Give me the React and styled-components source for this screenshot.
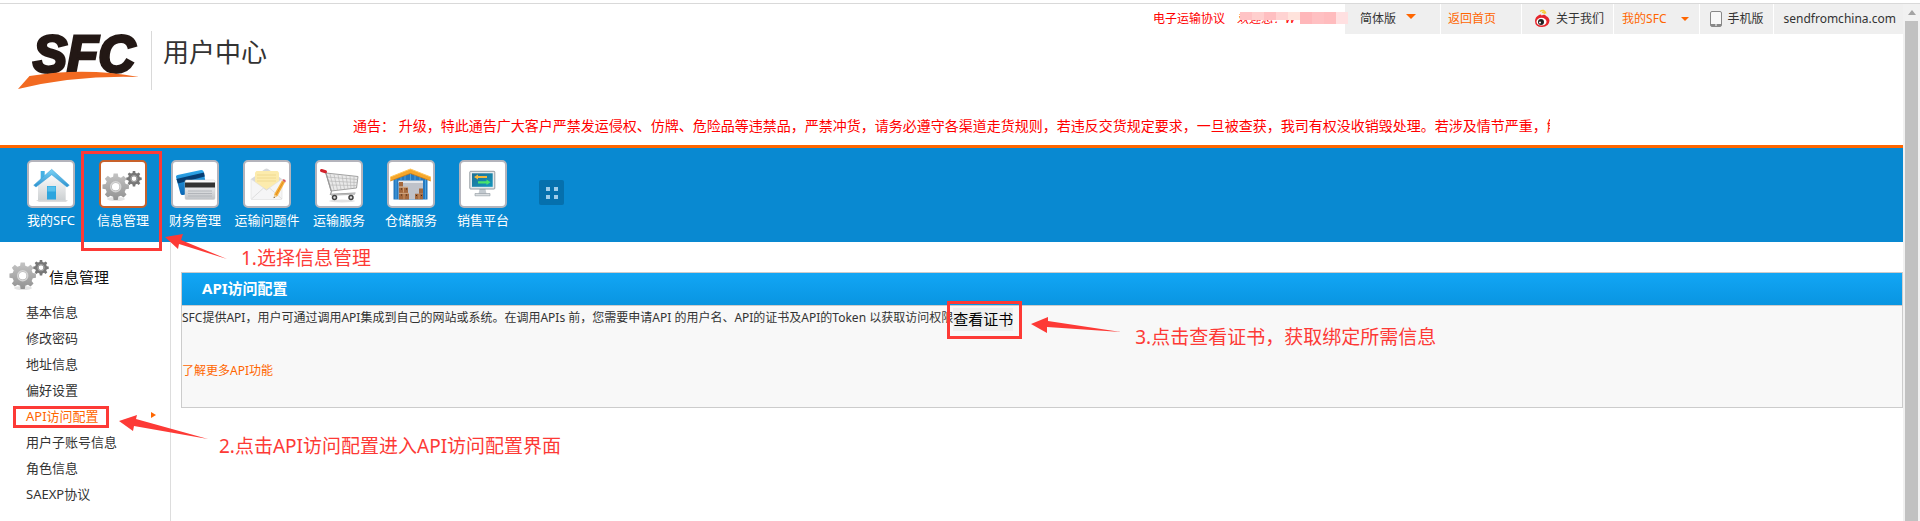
import React from 'react';
import styled, { createGlobalStyle, css } from 'styled-components';

const GlobalStyle = createGlobalStyle`
	* {
		box-sizing: border-box;
		margin: 0;
		padding: 0;
	}

	body {
		background: #fff;
		color: #333;
		font-family: 'Noto Sans', 'Noto Sans CJK SC', sans-serif;
		font-size: 12px;
	}

	a {
		color: inherit;
		text-decoration: none;
	}

	ul {
		list-style: none;
	}

	button {
		border: 0;
		background: none;
		color: inherit;
		font: inherit;
		cursor: pointer;
	}

	svg {
		display: block;
		flex: none;
		overflow: visible;
	}
`;

const Page = styled.div`
	display: flex;
	min-height: calc(100vh - 3px);
	margin-top: 3px;
	border-top: 1px solid #d9d9d9;
	overflow: hidden;
`;

const Content = styled.div`
	flex: 1;
	min-width: 0;
	display: flex;
	flex-direction: column;
`;

const ScrollTrack = styled.div`
	width: 17px;
	display: flex;
	flex-direction: column;
	align-items: center;
	background: #f1f1f1;
`;

const ScrollArrow = styled.div`
	margin: 6px 0;
	border: 4px solid transparent;
	border-top: 0;
	border-bottom: 5px solid #a3a3a3;
`;

const ScrollThumb = styled.div`
	flex: 1;
	width: 13px;
	background: #c1c1c1;
`;

const HeaderRow = styled.div`
	display: flex;
	justify-content: space-between;
	align-items: flex-start;
`;

const Brand = styled.div`
	display: flex;
	padding: 27px 0 0 17px;
`;

const BrandTitle = styled.h1`
	height: 59px;
	margin-left: 10px;
	padding-left: 11px;
	border-left: 1px solid #d9d9d9;
	font-size: 26px;
	font-weight: 400;
	line-height: 42px;
`;

const TopBar = styled.div`
	display: flex;
	height: 30px;
	line-height: 30px;
	white-space: nowrap;
`;

const Agreement = styled.a`
	color: #f00;
	margin-right: 12px;
`;

const Welcome = styled.span`
	position: relative;
	width: 108px;
	color: #f00;
	font-style: italic;
`;

const Mosaic = styled.span`
	position: absolute;
	top: 8px;
	left: 3px;
	display: flex;
	align-items: flex-start;
`;

const MosaicCell = styled.i`
	width: 12px;
	height: ${({ $tall }) => ($tall ? 12 : 8)}px;
	background: ${({ $tone }) => $tone};
`;

const barItem = css`
	display: flex;
	align-items: center;
	height: 30px;
	padding: 0 ${({ $right }) => $right}px 0 ${({ $left }) => $left}px;
	gap: ${({ $gap }) => $gap || 0}px;
	background: #efefef;
	color: ${({ $hot }) => ($hot ? '#f60' : '#333')};

	& + & {
		margin-left: 1px;
	}
`;

const BarLink = styled.a`
	${barItem}
`;

const BarButton = styled.button`
	${barItem}
	margin-right: 1px;
`;

const Caret = styled.i`
	border: ${({ $size }) => $size}px solid transparent;
	border-top-color: #f60;
	border-bottom: 0;
	margin-bottom: ${({ $raise }) => $raise || 0}px;
`;

const Notice = styled.p`
	margin: 26px 353px 9px;
	overflow: hidden;
	color: #f00;
	font-size: 14px;
	line-height: 20px;
	white-space: nowrap;
`;

const MainNav = styled.nav`
	position: relative;
	z-index: 2;
	display: flex;
	height: 97px;
	padding-left: 15px;
	border-top: 3px solid #f60;
	background: #0989d1;
`;

const NavItem = styled.div`
	position: relative;
	width: 72px;
	padding-top: 12px;
`;

const NavLink = styled.a`
	display: flex;
	flex-direction: column;
	align-items: center;
	color: #fff;
	font-size: 13px;
	line-height: 24px;
	white-space: nowrap;
`;

const IconTile = styled.span`
	width: 48px;
	height: 48px;
	border: 2px solid ${({ $active }) => ($active ? '#c8612a' : '#b4b4bc')};
	border-radius: 5px;
	background: #fff;
`;

const MoreButton = styled.button`
	display: grid;
	grid-template-columns: 4px 4px;
	gap: 4px;
	place-content: center;
	width: 25px;
	height: 25px;
	margin: 32px 0 0 20px;
	border-radius: 2px;
	background: #0570ad;
`;

const Dot = styled.i`
	height: 4px;
	background: #9fcdea;
`;

const Body = styled.div`
	flex: 1;
	display: flex;
`;

const Sidebar = styled.aside`
	position: relative;
	z-index: 1;
	width: 171px;
	padding-top: 18px;
	border-right: 1px solid #ddd;
`;

const SideTitle = styled.h2`
	display: flex;
	height: 34px;
	margin-bottom: 4px;
	padding-left: 9px;
	color: #111;
	font-size: 15px;
	font-weight: 400;
	line-height: 34px;
`;

const SideItem = styled.li`
	position: relative;
	display: flex;
	align-items: center;
	justify-content: space-between;
	height: 26px;
	padding: 0 14px 0 26px;
	color: ${({ $active }) => ($active ? '#f60' : '#333')};
	font-size: 13px;
	white-space: nowrap;
`;

const SideMarker = styled.i`
	border: 3px solid transparent;
	border-left: 5px solid #f60;
	border-right: 0;
`;

const Main = styled.main`
	flex: 1;
	min-width: 0;
	padding: 30px 0 0 10px;
`;

const Panel = styled.section`
	border: 1px solid #ccc;
	background: #f8f8f8;
`;

const PanelTitle = styled.h3`
	height: 33px;
	padding-left: 20px;
	border-bottom: 1px solid #ccc;
	background: linear-gradient(#12a6f5, #0995e1);
	color: #fff;
	font-size: 15px;
	line-height: 31px;
`;

const PanelBody = styled.div`
	padding-bottom: 24px;
	line-height: 24px;
`;

const ApiRow = styled.div`
	display: flex;
	align-items: flex-start;
	margin-bottom: 28px;
	white-space: nowrap;
`;

const CertSlot = styled.div`
	position: relative;
	padding-top: 2px;
`;

const CertButton = styled.button`
	display: block;
	height: 23px;
	background: #efefef;
	color: #000;
	font-size: 15px;
	line-height: 23px;
`;

const MoreLink = styled.a`
	color: #f60;
`;

/* red guide marks that lie over the page */
const Frame = styled.span`
	position: absolute;
	top: ${({ $top }) => $top}px;
	left: ${({ $left }) => $left}px;
	width: ${({ $width }) => $width}px;
	height: ${({ $height }) => $height}px;
	border: 3px solid #fd3a36;
	pointer-events: none;
`;

const ArrowSvg = styled.svg`
	position: absolute;
	top: ${({ $top }) => $top}px;
	left: ${({ $left }) => $left}px;
	fill: #fd3a36;
	pointer-events: none;
`;

const Hint = styled.span`
	position: absolute;
	top: ${({ $top }) => $top}px;
	left: ${({ $left }) => $left}px;
	color: #fd3a36;
	font-size: 19px;
	line-height: 24px;
	white-space: nowrap;
`;

const Arrow = ({ top, left, width, height, points }) => (
	<ArrowSvg $top={top} $left={left} width={width} height={height} aria-hidden="true">
		<polygon points={points} />
	</ArrowSvg>
);

const gearPath = (cx, cy, outer, inner, hole) => {
	const teeth = 8;
	const step = (Math.PI * 2) / teeth;
	const points = [];
	for (let i = 0; i < teeth; i++) {
		[
			[-0.32, inner],
			[-0.2, outer],
			[0.2, outer],
			[0.32, inner],
		].forEach(([shift, r]) => {
			const a = (i + shift) * step;
			points.push(`${(cx + r * Math.cos(a)).toFixed(2)} ${(cy + r * Math.sin(a)).toFixed(2)}`);
		});
	}
	return `M${points.join('L')}Z M${cx - hole} ${cy}a${hole} ${hole} 0 1 0 ${hole * 2} 0a${hole} ${hole} 0 1 0 ${-hole * 2} 0Z`;
};

const Gears = ({ width = 44, height = 44, viewBox = '2 2 44 44' }) => (
	<svg width={width} height={height} viewBox={viewBox} aria-hidden="true">
		<defs>
			<linearGradient id="gearLight" x2="0" y2="1">
				<stop stopColor="#c4c4c4" />
				<stop offset="1" stopColor="#929292" />
			</linearGradient>
		</defs>
		<ellipse cx="17" cy="39" rx="9" ry="2" fill="#e4e4e4" />
		<path d={gearPath(16.7, 26.7, 13.4, 10.4, 3.8)} fill="url(#gearLight)" fillRule="evenodd" />
		<circle cx="16.7" cy="26.7" r="5" fill="none" stroke="#d4d4d4" strokeWidth="1.5" />
		<path d={gearPath(35, 18.7, 7.8, 6, 2.4)} fill="#777" fillRule="evenodd" />
		<circle cx="35" cy="18.7" r="3.2" fill="none" stroke="#a8a8a8" />
	</svg>
);

const Home = () => (
	<svg width="44" height="44" viewBox="2 2 44 44" aria-hidden="true">
		<defs>
			<linearGradient id="homeWall" x2="0" y2="1">
				<stop stopColor="#fff" />
				<stop offset="1" stopColor="#ccd0d2" />
			</linearGradient>
			<linearGradient id="homeRoof" x2="0" y2="1">
				<stop stopColor="#7bd2f5" />
				<stop offset="1" stopColor="#2c92cf" />
			</linearGradient>
		</defs>
		<path d="M9 40h32l-2 2H12z" fill="#ddd" />
		<path d="M11 25L24.7 13 38.7 25v15.500H11z" fill="url(#homeWall)" />
		<path d="M13.700 11h4v6l-4 4z" fill="#45b1e4" />
		<path d="M24.700 9.300L42.300 25.200 40 27 24.700 14.700 9 27 6.700 25.200z" fill="url(#homeRoof)" stroke="#3a9ed6" strokeWidth=".5" />
		<path d="M20 26h9v13.500h-9z" fill="#2da5de" />
		<path d="M20.500 26.500h8v5h-8z" fill="#58c0ec" />
	</svg>
);

const Cards = () => (
	<svg width="44" height="44" viewBox="2 2 44 44" aria-hidden="true">
		<defs>
			<linearGradient id="cardBlue" x2="0" y2="1">
				<stop stopColor="#2fa9ea" />
				<stop offset="1" stopColor="#0b66b4" />
			</linearGradient>
			<linearGradient id="cardGrey" x2="0" y2="1">
				<stop stopColor="#fff" />
				<stop offset="1" stopColor="#bfc2c6" />
			</linearGradient>
		</defs>
		<path d="M6.500 15L30 10q2-.4 2.600 1.500L36 30 12 35q-2 .4-2.600-1.500L5 17q-.4-1.600 1.500-2z" fill="url(#cardBlue)" />
		<path d="M5.400 19L33 12.500l.8 4L7 23.500z" fill="#063d72" />
		<rect x="14" y="20" width="30" height="19.500" rx="1.500" fill="url(#cardGrey)" stroke="#ccc" strokeWidth=".5" />
		<path d="M14 22.500h30v5H14z" fill="#333" />
		<path d="M17 31h24M17 33.500h24M17 36h24" stroke="#b2b5ba" />
	</svg>
);

const Envelope = () => (
	<svg width="44" height="44" viewBox="2 2 44 44" aria-hidden="true">
		<path d="M8 19L22 9q1.500-1 3 0l14 10v20H8z" fill="#d7d9dc" />
		<path d="M12 12.500l1.500-1.500h21l1.500 1.500V30H12z" fill="#fcebad" />
		<path d="M14 15h19M14 18h19M14 21h19" stroke="#eed68c" strokeWidth=".8" />
		<path d="M8 19l15.500 11L39 19v19.500q0 1-1 1H9q-1 0-1-1z" fill="#f5f5f6" stroke="#ddd" strokeWidth=".6" />
		<path d="M8.500 39l12-11 3 2 3-2L39 39" fill="none" stroke="#d8d8d8" strokeWidth=".8" />
		<path d="M39 20.500l3 1.700L34.500 36l-3.700 2 .5-4z" fill="#f6b03b" />
		<path d="M40.500 21.400L33 35" stroke="#d98118" strokeWidth=".8" />
		<path d="M39.200 20.100l1-.9q2.500 0 2.600 1.700l-.6 1.700z" fill="#d3515a" />
		<path d="M31.200 34.500l2.700 1.600-3.200 2z" fill="#ecd0a0" />
		<path d="M30.900 36.700l1 .6-1.200.9z" fill="#333" />
	</svg>
);

const Cart = () => (
	<svg width="44" height="44" viewBox="2 2 44 44" fill="none" aria-hidden="true">
		<ellipse cx="27" cy="41" rx="13" ry="1.500" fill="#e2e2e2" />
		<path d="M11 13L43 16.500 41.500 28 16 31z" fill="#e9e9e9" stroke="#a2a2a2" />
		<path
			d="M15 14l4 16M19 14.500L22.500 30M23 15l3 14.500M27 15.300l2.500 14M31 15.600l2 13.400M35 16l1 12.700M39 16.400V28M12 17l30.700 2.500M13 21l29.300 1.500M14 25l28 .5"
			stroke="#b8b8b8"
			strokeWidth=".7"
		/>
		<path d="M7 11l3.500 1 6 19.500-1 2.800 25-1.300" stroke="#9a9a9a" strokeWidth="1.200" />
		<path d="M16 35l24-1" stroke="#bbb" strokeWidth="1.500" />
		<path d="M6.500 10.500l4 1.300" stroke="#d3232c" strokeWidth="3" strokeLinecap="round" />
		<circle cx="19.500" cy="37.500" r="2" fill="#ddd" stroke="#444" strokeWidth="1.500" />
		<circle cx="36" cy="37.500" r="2" fill="#ddd" stroke="#444" strokeWidth="1.500" />
	</svg>
);

const Warehouse = () => (
	<svg width="44" height="44" viewBox="2 2 44 44" aria-hidden="true">
		<path d="M6.500 17L23.500 11l17 6v22.500h-34z" fill="#2579c0" />
		<path d="M9 18v21M38.500 18v21M14 15v5M18 14v6M23.500 13v7M28 14v6M33 15v5" stroke="#4ba2df" />
		<path d="M11.500 20.700h24.500v18.600H11.500z" fill="#bfc2c9" />
		<path d="M11.500 20.700h24.500v2.300H11.500z" fill="#e5e7ea" />
		<path d="M12 22h4v4.500h-4zM12 27.500h9v5.500h-9zM12 33.500h10v6H12zM32 28.500h4v5h-4zM28 33.800h8v5.500h-8z" fill="#a4683c" />
		<path d="M12 27.200h9M12 33.300h10M16.500 27.500v5M17 34v5.500M32 34v5.500" stroke="#d9a677" strokeWidth=".8" />
		<path d="M14 29h1M19 29h1M14 35h1M19 35h1M29 35.500h1M34 35.500h1" stroke="#3f2412" />
		<path d="M23.400 9L43.800 17v4L23.400 13.500 3.300 21v-4z" fill="#f5a62b" />
		<path d="M3.300 17L23.400 9l20.400 8" fill="none" stroke="#ffc65c" />
		<path d="M3.300 21l20.100-7.500L43.800 21" fill="none" stroke="#c97610" strokeWidth=".7" />
	</svg>
);

const Monitor = () => (
	<svg width="44" height="44" viewBox="2 2 44 44" aria-hidden="true">
		<defs>
			<linearGradient id="screen" x2="1" y2="1">
				<stop stopColor="#1f7194" />
				<stop offset="1" stopColor="#1595bd" />
			</linearGradient>
		</defs>
		<path d="M20.500 29h6l1 5h-8z" fill="#c3cad0" />
		<path d="M16 33.500h15v2.300H16z" fill="#d9dde0" stroke="#8f979d" strokeWidth=".6" />
		<rect x="10.800" y="11.300" width="25" height="17.700" rx=".8" fill="#e6eaec" stroke="#7c878e" strokeWidth=".8" />
		<path d="M13 13.300h20.700v13.500H13z" fill="url(#screen)" />
		<path d="M15 17l4-2.500v1.500h9v2h-9v1.500z" fill="#f5b73c" />
		<path d="M31.500 22.300l-4-2.800v1.700H19v2.200h8.500V25z" fill="#4be36b" />
	</svg>
);

const Logo = () => (
	<svg width="124" height="59" viewBox="17 31 124 59" role="img" aria-label="SFC">
		<text
			x="33"
			y="72"
			fill="#231815"
			stroke="#231815"
			strokeWidth="3"
			fontFamily="Liberation Sans, sans-serif"
			fontSize="51"
			fontWeight="700"
			fontStyle="italic"
		>
			SFC
		</text>
		<path d="M29.500 76Q85 67 139 77 75 75 18 89z" fill="#f26a21" />
	</svg>
);

const Weibo = () => (
	<svg width="16" height="20" viewBox="0 0 16 20" aria-hidden="true">
		<path d="M6 2.500q4-3 6 2M8 3.500q2-1 2.500 1.500" fill="none" stroke="#f7cf3a" strokeWidth="1.400" />
		<path d="M1 12Q1 8 5 6q2-1 2.500.5Q11 5 12 7q3 1 3.500 4.500Q15 18 8 18T1 12z" fill="#e6262c" />
		<ellipse cx="7.500" cy="12.700" rx="5" ry="3.900" fill="#fff" />
		<circle cx="7" cy="13" r="3" fill="#222" />
		<circle cx="6" cy="13.500" r="1" fill="#fff" />
	</svg>
);

const Phone = () => (
	<svg width="12" height="16" viewBox="0 0 12 16" aria-hidden="true">
		<rect x=".5" y=".5" width="11" height="15" rx="1.500" fill="#f8f8f8" stroke="#888" />
		<path d="M1 13h10v2H1z" fill="#888" />
		<path d="M5 14h2" stroke="#fff" />
	</svg>
);

const mosaicCells = [
	['#ffc3c5'],
	['#ffcfce'],
	['#ffbfc1'],
	['#ffd3d2'],
	['#ffe3dc'],
	['#ffb7ba', true],
	['#ffc0c2', true],
	['#ffbcbe', true],
	['#ffe0e1', true],
];

const navItems = [
	{ label: '我的SFC', icon: Home },
	{ label: '信息管理', icon: Gears, active: true },
	{ label: '财务管理', icon: Cards },
	{ label: '运输问题件', icon: Envelope },
	{ label: '运输服务', icon: Cart },
	{ label: '仓储服务', icon: Warehouse },
	{ label: '销售平台', icon: Monitor },
];

const sideItems = [
	{ label: '基本信息' },
	{ label: '修改密码' },
	{ label: '地址信息' },
	{ label: '偏好设置' },
	{ label: 'API访问配置', active: true },
	{ label: '用户子账号信息' },
	{ label: '角色信息' },
	{ label: 'SAEXP协议' },
];

const Header = () => (
	<header>
		<HeaderRow>
			<Brand>
				<Logo />
				<BrandTitle>用户中心</BrandTitle>
			</Brand>
			<TopBar>
				<Agreement href="#">电子运输协议</Agreement>
				<Welcome>
					欢迎您！W
					<Mosaic aria-hidden="true">
						{mosaicCells.map(([tone, tall], index) => (
							<MosaicCell key={index} $tone={tone} $tall={tall} />
						))}
					</Mosaic>
				</Welcome>
				<BarButton type="button" $left={15} $right={24} $gap={10}>
					简体版
					<Caret $size={5} $raise={6} />
				</BarButton>
				<BarLink href="#" $hot $left={7} $right={25}>
					返回首页
				</BarLink>
				<BarLink href="#" $left={12} $right={9} $gap={6}>
					<Weibo />
					关于我们
				</BarLink>
				<BarLink href="#" $hot $left={8} $right={10} $gap={15}>
					我的SFC
					<Caret $size={4} />
				</BarLink>
				<BarLink href="#" $left={10} $right={10} $gap={5}>
					<Phone />
					手机版
				</BarLink>
				<BarLink href="#" $left={9} $right={7}>
					sendfromchina.com
				</BarLink>
			</TopBar>
		</HeaderRow>
		<Notice>
			通告： 升级，特此通告广大客户严禁发运侵权、仿牌、危险品等违禁品，严禁冲货，请务必遵守各渠道走货规则，若违反交货规定要求，一旦被查获，我司有权没收销毁处理。若涉及情节严重，触
		</Notice>
	</header>
);

const App = () => {
	return (
		<>
			<GlobalStyle />
			<Page>
				<Content>
					<Header />
					<MainNav>
						{navItems.map(({ label, icon: Icon, active }) => (
							<NavItem key={label}>
								<NavLink href="#">
									<IconTile $active={active}>
										<Icon />
									</IconTile>
									{label}
								</NavLink>
								{active && (
									<>
										<Frame $top={3} $left={-6} $width={81} $height={100} />
										<Arrow top={86} left={78} width={64} height={26} points="0,3 18,0 16,6 62,25 14,10 13,15" />
										<Hint $top={98} $left={154}>
											1.选择信息管理
										</Hint>
									</>
								)}
							</NavItem>
						))}
						<MoreButton type="button" aria-label="更多">
							<Dot />
							<Dot />
							<Dot />
							<Dot />
						</MoreButton>
					</MainNav>
					<Body>
						<Sidebar>
							<SideTitle>
								<Gears width={40} height={32} viewBox="3 11 40 32" />
								信息管理
							</SideTitle>
							<ul>
								{sideItems.map(({ label, active }) => (
									<SideItem key={label} $active={active}>
										<a href="#">{label}</a>
										{active && (
											<>
												<SideMarker />
												<Frame $top={4} $left={13} $width={96} $height={22} />
												<Arrow top={13} left={119} width={90} height={25} points="0,6 18,0 17,4 89,24 15,11 14,16" />
												<Hint $top={32} $left={219}>
													2.点击API访问配置进入API访问配置界面
												</Hint>
											</>
										)}
									</SideItem>
								))}
							</ul>
						</Sidebar>
						<Main>
							<Panel>
								<PanelTitle>API访问配置</PanelTitle>
								<PanelBody>
									<ApiRow>
										<p>
											SFC提供API，用户可通过调用API集成到自己的网站或系统。在调用APIs 前，您需要申请API
											的用户名、API的证书及API的Token 以获取访问权限
										</p>
										<CertSlot>
											<CertButton type="button">查看证书</CertButton>
											<Frame $top={-5} $left={-6} $width={75} $height={38} />
											<Arrow top={11} left={78} width={91} height={18} points="0,7 17,0 17,4 90,15 16,10 16,16" />
											<Hint $top={19} $left={182}>
												3.点击查看证书，获取绑定所需信息
											</Hint>
										</CertSlot>
									</ApiRow>
									<MoreLink href="#">了解更多API功能</MoreLink>
								</PanelBody>
							</Panel>
						</Main>
					</Body>
				</Content>
				<ScrollTrack aria-hidden="true">
					<ScrollArrow />
					<ScrollThumb />
				</ScrollTrack>
			</Page>
		</>
	);
};

export default App;
